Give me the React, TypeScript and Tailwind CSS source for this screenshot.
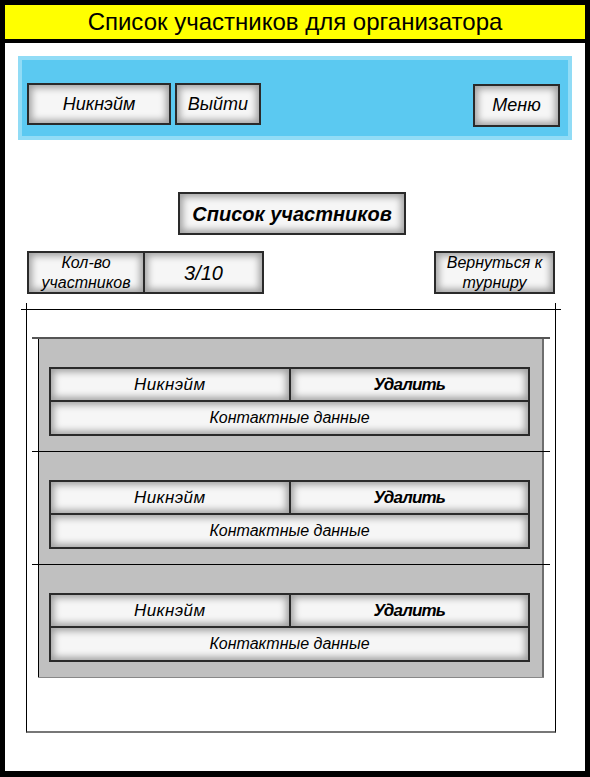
import React from 'react';

const font = { fontFamily: '"Liberation Sans", Arial, sans-serif' };

// raised grey "mockup" field used everywhere in the wireframe
const field =
  'flex items-center justify-center text-center italic text-black bg-[#f6f6f6] border-2 border-[#2a2a2a] shadow-[inset_0_0_7px_3px_rgba(0,0,0,0.35)]';

function ParticipantCard({ first }: { first?: boolean }) {
  return (
    <div className="flex flex-col">
      {/* crosshair style top line */}
      <div className={first ? '-mx-[6px] h-[2px] bg-[#555]' : '-mx-[6px] h-px bg-black'} />
      <div className="bg-[#c0c0c0] border-l border-black border-r-2 border-r-[#6e6e6e] pl-[10px] pr-[12px] pt-[28px] pb-[15px]">
        <div className="flex h-[35px]">
          <div className={`${field} flex-1 text-[17px] tracking-wide`}>Никнэйм</div>
          <div className={`${field} flex-1 -ml-[2px] text-[17px] font-bold tracking-tighter`}>Удалить</div>
        </div>
        <div className={`${field} h-[36px] -mt-[2px] text-[16px]`}>Контактные данные</div>
      </div>
    </div>
  );
}

export default function App() {
  return (
    <div style={font} className="w-[590px] h-[777px] bg-black p-[5px] pb-[6px]">
      <div className="flex flex-col h-full bg-white">
        {/* Title */}
        <div className="h-[38px] bg-[#ffff00] border-b-[4px] border-black flex items-center justify-center text-[24px] text-black">
          Список участников для организатора
        </div>

        {/* Top panel */}
        <div className="mx-[13px] mt-[13px] h-[84px] bg-[#5bc9f1] border-[4px] border-[#91dcf6] flex items-start justify-between pt-[23px] pl-[5px] pr-[8px]">
          <div className="flex gap-[4px]">
            <div className={`${field} w-[144px] h-[42px] text-[18px]`}>Никнэйм</div>
            <div className={`${field} w-[86px] h-[42px] text-[18px]`}>Выйти</div>
          </div>
          <div className={`${field} w-[87px] h-[43px] mt-px text-[18px]`}>Меню</div>
        </div>

        {/* Heading */}
        <div className="flex justify-center mt-[52px] pr-[6px]">
          <div className={`${field} w-[228px] h-[43px] text-[20px] font-bold`}>Список участников</div>
        </div>

        {/* Counter row */}
        <div className="flex justify-between mt-[16px] pl-[22px] pr-[30px]">
          <div className="flex">
            <div className={`${field} w-[118px] h-[43px] text-[16px] leading-[20px]`}>
              Кол-во<br />участников
            </div>
            <div className={`${field} w-[121px] h-[43px] -ml-[2px] text-[20px]`}>3/10</div>
          </div>
          <div className={`${field} w-[121px] h-[43px] text-[16px] leading-[20px]`}>
            Вернуться к<br />турниру
          </div>
        </div>

        {/* Participants frame */}
        <div className="mt-[9px] ml-[21px] w-[530px] h-[430px] flex flex-col border-l border-r border-black border-b-2 border-b-[#777]">
          <div className="mt-[6px] -ml-[6px] -mr-[6px] h-px bg-black" />
          <div className="mt-[27px] mx-[11px] flex flex-col">
            <ParticipantCard first />
            <ParticipantCard />
            <ParticipantCard />
            <div className="h-px bg-[#888]" />
          </div>
        </div>
      </div>
    </div>
  );
}
